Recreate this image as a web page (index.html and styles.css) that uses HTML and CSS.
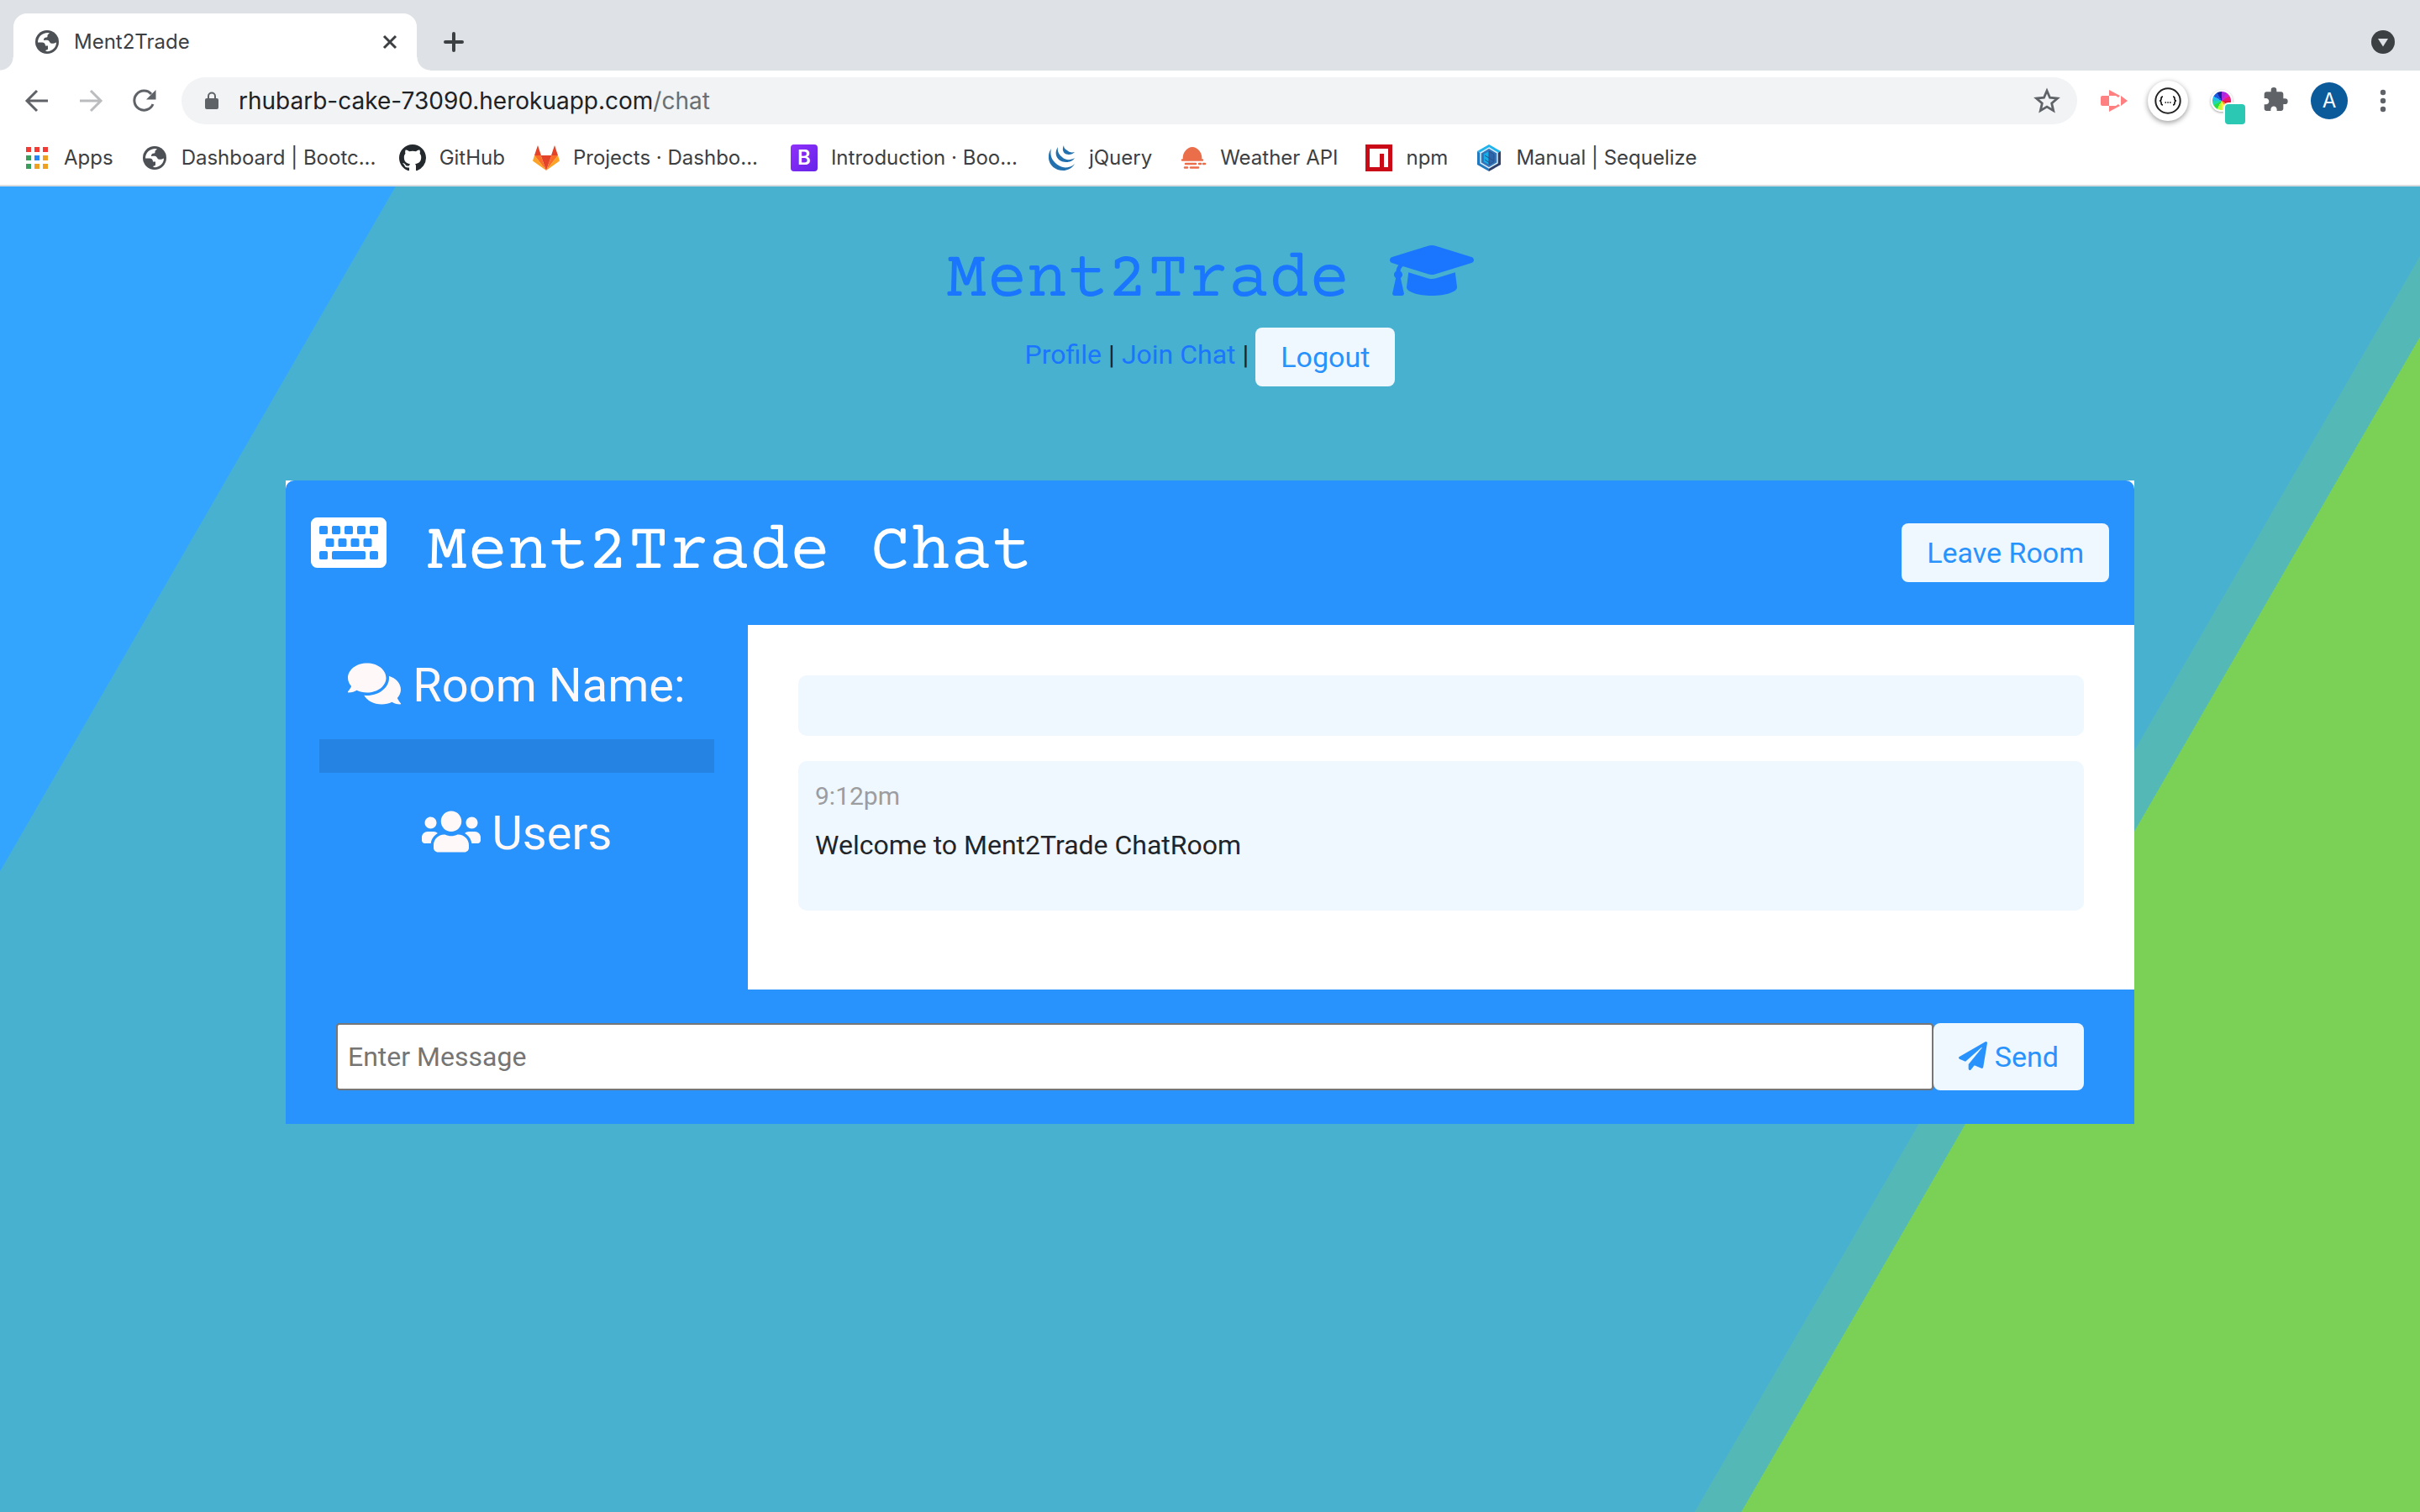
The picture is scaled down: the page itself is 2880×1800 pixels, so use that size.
FILE: index.html
```html
<!DOCTYPE html>
<html lang="en">
<head>
<meta charset="utf-8">
<title>Ment2Trade</title>
<link rel="stylesheet" href="styles.css">
</head>
<body>
<svg class="sprite" aria-hidden="true">
  <symbol id="globe" viewBox="0 0 28 28">
    <circle cx="14" cy="14" r="14" fill="#4d5156"/>
    <path d="M15 3C8 3 3 8 3 14.500h5c2.500 0 4 1.500 4 4h3v3.500c0 1-1 1.500-2.500 1.700V25C19 26 25 21 25 14.500c-2 1-3.500 1.500-5.500 1.300-2.500-.3-2.500-3.300-4.500-3.800-2-.4-3.500.3-5 0 0-2.500 1-3.500 3.500-3.500 1 0 1-1 1-2 0-1.500 1.500-2 2.500-3z" fill="#fff"/>
  </symbol>
</svg>

<div class="browser">
  <div class="tabstrip">
    <div class="tab">
      <svg class="tab-icon" viewBox="0 0 28 28"><use href="#globe"/></svg>
      <span class="tab-title">Ment2Trade</span>
      <button class="icon-button" aria-label="Close tab"><svg width="20" height="20" viewBox="0 0 20 20"><path d="M3 3l14 14M17 3L3 17" stroke="#3c4043" stroke-width="3"/></svg></button>
    </div>
    <button class="icon-button new-tab" aria-label="New tab"><svg width="24" height="24" viewBox="0 0 24 24"><path d="M12 2v20M2 12h20" stroke="#3c4043" stroke-width="4" stroke-linecap="round"/></svg></button>
    <button class="icon-button tab-search" aria-label="Search tabs"><svg width="28" height="28" viewBox="0 0 28 28"><circle cx="14" cy="14" r="14" fill="#3c4043"/><path d="M8 10h12l-6 9.500z" fill="#dee1e6"/></svg></button>
  </div>

  <div class="toolbar">
    <div class="nav-buttons">
      <button class="icon-button" aria-label="Back"><svg width="32" height="32" viewBox="0 0 32 32"><path d="M29 16H5M16 4L4 16l12 12" fill="none" stroke="#5f6368" stroke-width="3"/></svg></button>
      <button class="icon-button" aria-label="Forward"><svg width="32" height="32" viewBox="0 0 32 32"><path d="M3 16h24M16 4l12 12-12 12" fill="none" stroke="#babcbe" stroke-width="3"/></svg></button>
      <button class="icon-button" aria-label="Reload"><svg width="32" height="32" viewBox="0 0 32 32"><path d="M26 20A11.500 11.500 0 1 1 24 8" fill="none" stroke="#5f6368" stroke-width="3"/><path d="M29.500 3v11.500H18z" fill="#5f6368"/></svg></button>
    </div>
    <label class="address">
      <svg width="16" height="24" viewBox="0 0 16 24"><path d="M4 10V6.500a4 4 0 0 1 8 0V10" fill="none" stroke="#5f6368" stroke-width="2"/><rect y="9" width="16" height="13" rx="2" fill="#5f6368"/></svg>
      <span class="url">rhubarb-cake-73090.herokuapp.com<span class="path">/chat</span></span>
      <button class="icon-button" aria-label="Bookmark this page"><svg width="32" height="32" viewBox="0 0 32 32"><path d="M16 4l3.500 8.200 9 .8-6.800 6 2 8.700L16 23.100l-7.700 4.600 2-8.700-6.800-6 9-.8z" fill="none" stroke="#5f6368" stroke-width="2.800"/></svg></button>
    </label>
    <div class="extensions">
      <button class="icon-button" aria-label="Screen recorder"><svg width="32" height="32" viewBox="0 0 32 32"><path d="M2 10h8v12H2a2 2 0 0 1-2-2v-8a2 2 0 0 1 2-2zM10 3l13 7-2 2-3-2h-8zM10 29l13-7-2-2-3 2h-8zM24 10l8 6-8 6z" fill="#ff8080"/></svg></button>
      <button class="icon-button round" aria-label="JSON viewer"><svg width="32" height="32" viewBox="0 0 32 32"><circle cx="16" cy="16" r="14.700" fill="none" stroke="#222" stroke-width="2"/><path d="M10 11c-2 0-2 1-2 2.500S8 16 6 16c2 0 2 1 2 2.500S8 21 10 21M22 11c2 0 2 1 2 2.500s0 2.500 2 2.500c-2 0-2 1-2 2.500S24 21 22 21" fill="none" stroke="#111" stroke-width="1.600"/><path d="M12.500 18h1.500M15.300 18h1.500M18.100 18h1.500" stroke="#111" stroke-width="1.500"/></svg></button>
      <button class="icon-button picker" aria-label="Color picker"><span class="wheel"></span><span class="swatch"></span></button>
      <button class="icon-button" aria-label="Extensions"><svg width="32" height="32" viewBox="0 1 24 24"><path d="M20.500 11H19V7c0-1.100-.9-2-2-2h-4V3.500a2.500 2.500 0 0 0-5 0V5H4c-1.100 0-1.990.9-1.990 2v3.800H3.500c1.490 0 2.700 1.210 2.700 2.700s-1.210 2.700-2.700 2.700H2V20c0 1.100.9 2 2 2h3.800v-1.500c0-1.490 1.210-2.700 2.700-2.700s2.700 1.210 2.700 2.700V22H17c1.100 0 2-.9 2-2v-4h1.500a2.500 2.500 0 0 0 0-5z" fill="#5f6368"/></svg></button>
      <button class="avatar" aria-label="Profile A">A</button>
      <button class="icon-button" aria-label="Menu"><svg width="32" height="32" viewBox="0 0 32 32" fill="#5f6368"><circle cx="16" cy="6" r="3.200"/><circle cx="16" cy="16" r="3.200"/><circle cx="16" cy="26" r="3.200"/></svg></button>
    </div>
  </div>

  <nav class="bookmarks" aria-label="Bookmarks">
    <a href="#"><svg viewBox="0 0 32 32"><path d="M3 3h6v6H3zM13 3h6v6h-6zM23 3h6v6h-6z" fill="#f33b36"/><path d="M3 13h6v6H3zM3 23h6v6H3z" fill="#3a9d5b"/><path d="M13 13h6v6h-6z" fill="#2684f5"/><path d="M23 13h6v6h-6zM13 23h6v6h-6zM23 23h6v6h-6z" fill="#eea023"/></svg><span>Apps</span></a>
    <a href="#"><svg viewBox="-2 -2 32 32"><use href="#globe" width="28" height="28"/></svg><span class="long">Dashboard | Bootc...</span></a>
    <a href="#"><svg viewBox="0 0 16 16"><path fill="#24292e" d="M8 0C3.580 0 0 3.580 0 8c0 3.540 2.290 6.530 5.470 7.590.4.070.55-.17.55-.38 0-.19-.01-.82-.01-1.490-2.010.37-2.530-.49-2.690-.94-.09-.23-.48-.94-.82-1.130-.28-.15-.68-.52-.01-.53.63-.01 1.080.58 1.230.82.72 1.210 1.870.87 2.330.66.07-.52.28-.87.51-1.070-1.780-.2-3.640-.89-3.640-3.950 0-.87.31-1.590.82-2.150-.08-.2-.36-1.020.08-2.120 0 0 .67-.21 2.200.82.64-.18 1.320-.27 2-.27s1.360.09 2 .27c1.530-1.040 2.200-.82 2.200-.82.44 1.100.16 1.920.08 2.120.51.56.82 1.270.82 2.150 0 3.070-1.870 3.750-3.650 3.950.29.25.54.73.54 1.480 0 1.070-.01 1.930-.01 2.200 0 .21.15.46.55.38A8.010 8.010 0 0 0 16 8c0-4.420-3.580-8-8-8z"/></svg><span>GitHub</span></a>
    <a href="#"><svg viewBox="0 0 32 32"><path d="M16 31L9.500 13h13z" fill="#e24329"/><path d="M16 31L2 13h7.500zM16 31l14-18h-7.500z" fill="#fc6d26"/><path d="M2 13L0 19.500 16 31zM30 13l2 6.500L16 31z" fill="#fca326"/><path d="M2 13L6 1l4 12zM30 13L26 1l-4 12z" fill="#e24329"/></svg><span class="long">Projects · Dashbo...</span></a>
    <a href="#"><span class="bootstrap">B</span><span class="long">Introduction · Boo...</span></a>
    <a href="#"><svg viewBox="0 0 32 32" fill="#2270ae"><path d="M3 5c-8 12 0 27 16 26 6-1 10-4 12-8-5 5-13 6-19 2C4 20 1 13 3 5z"/><path d="M11 3c-6 9 0 18 10 18 5 0 8-2 10-5-5 3-11 3-15-1-4-3-6-7-5-12z"/><path d="M18 1c-3 6 0 11 6 11 3 0 5-1 7-3-4 1-7 0-9-2-3-2-4-3-4-6z"/></svg><span>jQuery</span></a>
    <a href="#"><svg viewBox="0 0 32 32"><path d="M4 19C2 10 9 3 15 3s13 7 11 16z" fill="#eb6e4b"/><path d="M3 18.500h24M7 23h12M6 27.500h3M13 27.500h9M23 23h2M28 23h2" stroke="#eb6e4b" stroke-width="2.600" stroke-linecap="round"/></svg><span>Weather API</span></a>
    <a href="#"><svg viewBox="0 0 32 32"><path d="M0 0h32v32H0z" fill="#cb0a18"/><path d="M5 5h22v22h-5V11h-5v16H5z" fill="#fff"/></svg><span>npm</span></a>
    <a href="#"><svg viewBox="0 0 32 32"><path d="M16 0l14 8L16 16 2 8z" fill="#1fb4ee"/><path d="M2 8l14 8v16L2 24z" fill="#2379bd"/><path d="M30 8l-14 8v16l14-8z" fill="#2f406a"/><path d="M16 4l10 6v12l-10 6-10-6V10z" fill="#3375bb" stroke="#d7ecf7" stroke-width="1.500"/><path d="M16 8l6 3.500v9L16 24l-6-3.500v-9z" fill="#16aee9"/><path d="M16 8v16l6-3.500v-9zM11 13l10 6M11 18l6 4" fill="#2b66ad" stroke="#2c4f87"/></svg><span>Manual | Sequelize</span></a>
  </nav>
</div>

<div class="page">
  <header class="site-header">
    <h1 class="title">Ment2Trade <svg class="cap" viewBox="0 0 640 512" fill="currentColor"><path d="M622.340 153.200L343.400 67.500c-15.200-4.670-31.600-4.670-46.790 0L17.660 153.200c-23.540 7.230-23.540 38.360 0 45.590l48.630 14.940c-10.670 13.190-17.230 29.280-17.880 46.900C38.780 266.150 32 276.110 32 288c0 10.780 5.680 19.850 13.860 25.650L20.330 428.530C18.110 438.520 25.710 448 35.940 448h56.110c10.240 0 17.840-9.480 15.620-19.470L82.140 313.650C90.320 307.850 96 298.780 96 288c0-11.570-6.470-21.250-15.660-26.870.76-15.020 8.440-28.300 20.690-36.720L296.600 284.500c9.060 2.780 26.440 6.250 46.790 0l278.950-85.700c23.550-7.240 23.550-38.360 0-45.600zM352.790 315.090c-28.530 8.760-52.840 3.920-65.590 0l-145.020-44.550L128 384c0 35.350 85.960 64 192 64s192-28.650 192-64l-14.180-113.470-145.030 44.560z"/></svg></h1>
    <nav class="site-nav" aria-label="Site">
      <a href="#">Profile</a><span>|</span><a href="#">Join Chat</a><span>|</span>
      <button class="btn">Logout</button>
    </nav>
  </header>

  <div class="chat">
    <header class="chat-header">
      <h1 class="title"><svg class="keyboard" viewBox="0 0 576 512" fill="currentColor"><path fill-rule="evenodd" d="M48 64H528a48 48 0 0 1 48 48V400a48 48 0 0 1-48 48H48a48 48 0 0 1-48-48V112a48 48 0 0 1 48-48zM76 128a12 12 0 0 0-12 12v40a12 12 0 0 0 12 12h40a12 12 0 0 0 12-12v-40a12 12 0 0 0-12-12zM172 128a12 12 0 0 0-12 12v40a12 12 0 0 0 12 12h40a12 12 0 0 0 12-12v-40a12 12 0 0 0-12-12zM268 128a12 12 0 0 0-12 12v40a12 12 0 0 0 12 12h40a12 12 0 0 0 12-12v-40a12 12 0 0 0-12-12zM364 128a12 12 0 0 0-12 12v40a12 12 0 0 0 12 12h40a12 12 0 0 0 12-12v-40a12 12 0 0 0-12-12zM460 128a12 12 0 0 0-12 12v40a12 12 0 0 0 12 12h40a12 12 0 0 0 12-12v-40a12 12 0 0 0-12-12zM124 224a12 12 0 0 0-12 12v40a12 12 0 0 0 12 12h40a12 12 0 0 0 12-12v-40a12 12 0 0 0-12-12zM220 224a12 12 0 0 0-12 12v40a12 12 0 0 0 12 12h40a12 12 0 0 0 12-12v-40a12 12 0 0 0-12-12zM316 224a12 12 0 0 0-12 12v40a12 12 0 0 0 12 12h40a12 12 0 0 0 12-12v-40a12 12 0 0 0-12-12zM412 224a12 12 0 0 0-12 12v40a12 12 0 0 0 12 12h40a12 12 0 0 0 12-12v-40a12 12 0 0 0-12-12zM76 320a12 12 0 0 0-12 12v40a12 12 0 0 0 12 12h40a12 12 0 0 0 12-12v-40a12 12 0 0 0-12-12zM172 320a12 12 0 0 0-12 12v40a12 12 0 0 0 12 12h232a12 12 0 0 0 12-12v-40a12 12 0 0 0-12-12zM460 320a12 12 0 0 0-12 12v40a12 12 0 0 0 12 12h40a12 12 0 0 0 12-12v-40a12 12 0 0 0-12-12z"/></svg> Ment2Trade Chat</h1>
      <button class="btn">Leave Room</button>
    </header>

    <main class="chat-main">
      <aside class="sidebar">
        <h3><svg class="comments" viewBox="0 0 576 512" fill="currentColor"><path d="M416 192c0-88.400-93.100-160-208-160S0 103.600 0 192c0 34.300 14.100 65.900 38 92-13.400 30.200-35.500 54.200-35.800 54.500-2.200 2.300-2.800 5.700-1.500 8.700S4.800 352 8 352c36.600 0 66.900-12.300 88.700-25 32.200 15.700 70.300 25 111.300 25 114.900 0 208-71.600 208-160zm122 220c23.900-26 38-57.700 38-92 0-66.900-53.500-124.200-129.300-148.100.9 6.600 1.300 13.300 1.300 20.100 0 105.900-107.700 192-240 192-10.800 0-21.300-.8-31.700-1.900C207.800 439.600 281.800 480 368 480c41 0 79.100-9.200 111.300-25 21.800 12.700 52.100 25 88.700 25 3.200 0 6.100-1.900 7.300-4.800 1.300-2.900.7-6.300-1.500-8.700-.3-.3-22.400-24.200-35.800-54.500z"/></svg> Room Name:</h3>
        <h2 class="room-name"></h2>
        <h3><svg class="users" viewBox="0 0 640 512" fill="currentColor"><path d="M96 224c35.300 0 64-28.700 64-64s-28.700-64-64-64-64 28.700-64 64 28.700 64 64 64zm448 0c35.300 0 64-28.700 64-64s-28.700-64-64-64-64 28.700-64 64 28.700 64 64 64zm32 32h-64c-17.600 0-33.500 7.100-45.100 18.600 40.300 22.100 68.900 62 75.100 109.400h66c17.700 0 32-14.300 32-32v-32c0-35.300-28.700-64-64-64zm-256 0c61.900 0 112-50.100 112-112S381.900 32 320 32 208 82.100 208 144s50.100 112 112 112zm76.800 32h-8.300c-20.800 10-43.900 16-68.500 16s-47.600-6-68.500-16h-8.300C179.600 288 128 339.600 128 403.200V432c0 26.500 21.500 48 48 48h288c26.500 0 48-21.500 48-48v-28.800c0-63.600-51.600-115.200-115.200-115.200zm-223.700-13.400C161.500 263.100 145.600 256 128 256H64c-35.300 0-64 28.700-64 64v32c0 17.700 14.300 32 32 32h65.900c6.300-47.400 34.900-87.300 75.200-109.400z"/></svg> Users</h3>
      </aside>
      <section class="messages">
        <div class="message"></div>
        <div class="message welcome">
          <p class="meta">9:12pm</p>
          <p>Welcome to Ment2Trade ChatRoom</p>
        </div>
      </section>
    </main>

    <form class="chat-form">
      <input type="text" placeholder="Enter Message" aria-label="Enter Message">
      <button class="btn" type="button"><svg class="plane" viewBox="0 0 512 512" fill="currentColor"><path d="M476 3.200L12.500 270.600c-18.100 10.400-15.800 35.600 2.200 43.200L121 358.400l287.300-253.200c5.500-4.900 13.300 2.600 8.600 8.300L176 407v80.500c0 23.600 28.500 32.900 42.500 15.800L282 426l124.600 52.200c14.200 6 30.400-2.900 33-18.200l72-432C515 7.800 493.300-6.800 476 3.200z"/></svg> Send</button>
    </form>
  </div>
</div>
</body>
</html>
```
FILE: styles.css
```css
* { box-sizing: border-box; }

body {
  margin: 0;
  min-height: 100vh;
  display: flex;
  flex-direction: column;
  font-family: Roboto, sans-serif;
  font-size: 32px;
  line-height: 48px;
  color: #212529;
}

h1, h2, h3, p { margin: 0; font-weight: 400; }
a { text-decoration: none; }
button, input { font: inherit; }
.sprite { position: absolute; width: 0; height: 0; }

/* Browser window */
.browser {
  font-family: Inter, sans-serif;
  font-size: 24px;
  line-height: 32px;
  color: #3c4043;
  background: #fff;
  border-bottom: 2px solid #dadce0;
}

.icon-button {
  display: flex;
  align-items: center;
  justify-content: center;
  padding: 0;
  border: 0;
  background: none;
}

.tabstrip {
  display: flex;
  align-items: center;
  height: 84px;
  padding: 16px 30px 0 16px;
  background: #dee1e6;
}

.tab {
  position: relative;
  display: flex;
  align-items: center;
  gap: 18px;
  width: 480px;
  height: 68px;
  padding: 0 22px 0 26px;
  border-radius: 16px 16px 0 0;
  background: #fff;
}

.tab::before, .tab::after {
  content: "";
  position: absolute;
  bottom: 0;
  width: 16px;
  height: 16px;
}
.tab::before { right: 100%; background: radial-gradient(circle at 0 0, transparent 15px, #fff 16px); }
.tab::after { left: 100%; background: radial-gradient(circle at 100% 0, transparent 15px, #fff 16px); }

.tab-icon { width: 28px; height: 28px; }
.tab-title { flex: 1; }
.new-tab { margin-left: 32px; }
.tab-search { margin-left: auto; }

.toolbar {
  display: flex;
  align-items: center;
  height: 72px;
  padding: 0 28px;
}

.nav-buttons { display: flex; gap: 32px; margin-right: 28px; }

.address {
  flex: 1;
  display: flex;
  align-items: center;
  gap: 24px;
  height: 56px;
  padding: 0 20px 0 28px;
  border-radius: 28px;
  background: #f1f3f4;
}
.url { flex: 1; font-size: 28px; color: #202124; }
.path { color: #6b6e72; }

.extensions { display: flex; align-items: center; gap: 32px; margin-left: 28px; }

.round {
  width: 48px;
  height: 48px;
  margin: 0 -8px;
  border-radius: 50%;
  background: #fff;
  box-shadow: 0 2px 6px rgba(0, 0, 0, .4);
}

.picker { position: relative; width: 32px; height: 32px; }
.wheel {
  width: 26px;
  height: 26px;
  border: 2px solid #fff;
  border-radius: 50%;
  box-shadow: 0 1px 3px rgba(0, 0, 0, .4);
  background: conic-gradient(#a32be0 0 30deg, #d321cf 30deg 60deg, #e81b76 60deg 90deg, #e31b3c 90deg 120deg, #ff8a3a 120deg 150deg, #f5f542 150deg 180deg, #bdfc3a 180deg 210deg, #2bdc47 210deg 240deg, #22d8b0 240deg 270deg, #25bfe5 270deg 300deg, #1b59e0 300deg 330deg, #1a1f9c 330deg 360deg) border-box;
}
.swatch {
  position: absolute;
  left: 20px;
  top: 20px;
  width: 24px;
  height: 24px;
  border-radius: 4px;
  background: #2bc9b4;
  box-shadow: 0 0 0 2px #fff;
}

.avatar {
  width: 44px;
  height: 44px;
  margin: 0 -6px;
  padding: 0;
  border: 0;
  border-radius: 50%;
  background: #0b5a9a;
  color: #fff;
}

.bookmarks {
  display: flex;
  align-items: center;
  gap: 33px;
  height: 64px;
  padding: 0 28px;
}
.bookmarks a { display: flex; align-items: center; gap: 16px; color: #3c4043; white-space: nowrap; }
.bookmarks svg { width: 32px; height: 32px; }
.long { width: 226px; }
.bootstrap {
  width: 32px;
  border-radius: 4px;
  background: linear-gradient(135deg, #9030fb, #6523e8);
  color: #fff;
  font-weight: 600;
  text-align: center;
}

/* Chat page */
.page {
  flex: 1;
  padding: 60px 60px 0;
  background: linear-gradient(-60deg, #7bd156 699px, #54b9b6 700px 747px, #48b1cf 748px 2875px, #33a5ff 2876px);
}

.title {
  font-family: "Courier Prime", "Liberation Mono", monospace;
  font-size: 80px;
  line-height: 104px;
}
.title svg { height: 80px; vertical-align: -10px; }
.cap { width: 100px; }
.keyboard { width: 90px; }

.site-header {
  display: flex;
  flex-direction: column;
  align-items: center;
  gap: 4px;
  color: #1a75ff;
}

.site-nav { display: flex; gap: 8px; line-height: 64px; color: #212529; }
.site-nav a { color: #1a75ff; }

.btn {
  height: 70px;
  padding: 0 30px;
  border: 0;
  border-radius: 8px;
  background: #eff7ff;
  color: #2892fd;
  font-size: 34px;
  line-height: 48px;
  cursor: pointer;
}

.chat {
  max-width: 2200px;
  margin: 112px auto 0;
  background: #fff;
}

.chat-header {
  display: flex;
  align-items: center;
  justify-content: space-between;
  padding: 34px 30px;
  border-radius: 10px 10px 0 0;
  background: #2892fd;
  color: #fff;
}

.chat-main { display: grid; grid-template-columns: 1fr 3fr; min-height: 434px; }

.sidebar {
  padding: 38px 40px;
  background: #2892fd;
  color: #fff8f8;
  text-align: center;
}
.sidebar h3 { font-size: 56px; line-height: 68px; }
.sidebar svg { height: 56px; vertical-align: -7px; }
.comments { width: 63px; }
.users { width: 70px; }
.room-name { height: 40px; margin: 30px 0 38px; background: #2583e3; }

.messages { padding: 60px; background: #fff; }
.message {
  min-height: 72px;
  margin-bottom: 30px;
  padding: 18px 20px;
  border-radius: 10px;
  background: #eff7ff;
}
.welcome { min-height: 178px; }
.meta { margin-bottom: 10px; font-size: 30px; color: #9b9da0; }

.chat-form { display: flex; padding: 40px 60px; background: #2892fd; }
.chat-form input {
  flex: 1;
  min-width: 0;
  height: 80px;
  padding: 0 12px;
  border: 2px solid #767676;
  border-radius: 4px;
  background: #fff;
}
.chat-form input::placeholder { color: #757575; opacity: 1; }
.chat-form .btn { height: 80px; }
.plane { width: 34px; height: 34px; vertical-align: -4px; }
```
